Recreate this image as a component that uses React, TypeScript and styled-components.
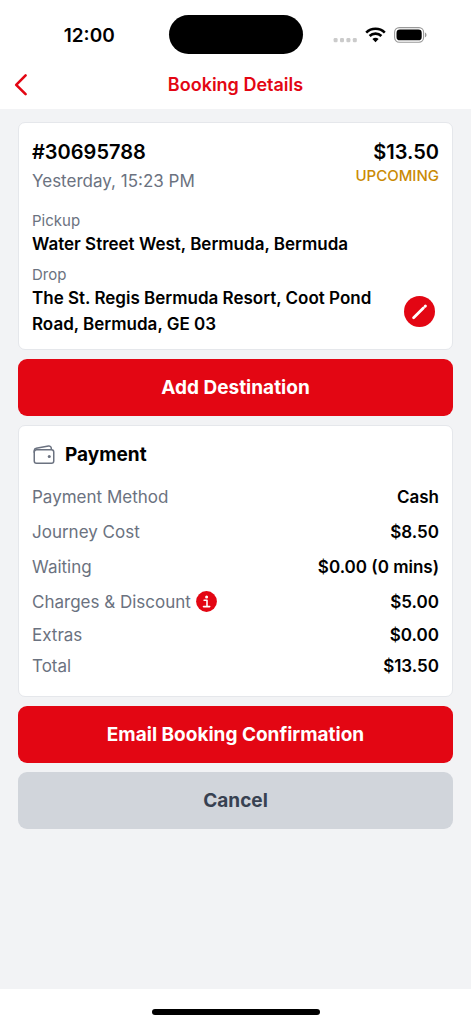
import React from "react";
import styled, { createGlobalStyle } from "styled-components";
import { IoWalletOutline } from "react-icons/io5";

const GlobalStyle = createGlobalStyle`
  *, *::before, *::after { box-sizing: border-box; }
  body { margin: 0; background: #fff; color: #000; font-family: Inter, "Liberation Sans", sans-serif; }
  h1, h2, p, dl, dt, dd { margin: 0; font-weight: 400; }
  button { border: 0; padding: 0; font-family: inherit; cursor: pointer; }
`;

const red = "#e30613";
const grey = "#6b7280";

const Screen = styled.div`
  display: flex;
  flex-direction: column;
  min-height: 100vh;
`;

const StatusBar = styled.div`
  display: grid;
  grid-template-columns: 1fr auto 1fr;
  align-items: center;
  padding: 15px 0 6px;
`;

const Clock = styled.time`
  justify-self: center;
  padding: 2px 0 0 10px;
  font-size: 19px;
  line-height: 24px;
  font-weight: 600;
`;

const Island = styled.div`
  width: 134px;
  height: 39px;
  border-radius: 20px;
  background: #000;
`;

const Indicators = styled.div`
  display: flex;
  align-items: center;
  justify-self: center;
  gap: 8px;
  padding-right: 14px;
`;

const NavBar = styled.header`
  display: grid;
  grid-template-columns: 1fr auto 1fr;
  align-items: center;
  height: 49px;
  color: ${red};
`;

const BackButton = styled.button`
  display: flex;
  align-items: center;
  justify-self: start;
  height: 40px;
  padding: 0 12px;
  background: none;
  color: inherit;
`;

const NavTitle = styled.h1`
  font-size: 18px;
  line-height: 24px;
  font-weight: 600;
`;

const Content = styled.main`
  flex: 1;
  display: flex;
  flex-direction: column;
  gap: 9px;
  padding: 13px 18px;
  background: #f2f3f5;
`;

const Card = styled.section`
  padding: 15px 13px 12px;
  border: 1px solid #e5e7eb;
  border-radius: 7px;
  background: #fff;
`;

const Summary = styled.div`
  display: flex;
  justify-content: space-between;
  margin-bottom: 15px;
`;

const SummaryColumn = styled.div<{ $end?: boolean }>`
  text-align: ${(p) => (p.$end ? "right" : "left")};
`;

const Headline = styled.p`
  font-size: 20px;
  line-height: 28px;
  font-weight: 600;
`;

const DateText = styled.p`
  font-size: 17px;
  line-height: 30px;
  color: ${grey};
`;

const Status = styled.p`
  font-size: 15px;
  line-height: 20px;
  font-weight: 500;
  color: #ca8a04;
`;

const Stop = styled.div`
  & + & { margin-top: 8px; }
`;

const StopLabel = styled.p`
  font-size: 15px;
  line-height: 20px;
  color: ${grey};
`;

const StopRow = styled.div`
  display: flex;
  align-items: center;
  justify-content: space-between;
  gap: 20px;
  padding-right: 4px;
`;

const Address = styled.p`
  font-size: 17px;
  line-height: 26px;
  font-weight: 600;
`;

const EditButton = styled.button`
  display: grid;
  place-items: center;
  flex: none;
  width: 31px;
  height: 31px;
  border-radius: 50%;
  background: ${red};
  color: #fff;
`;

const ActionButton = styled.button<{ $muted?: boolean }>`
  height: 57px;
  border-radius: 9px;
  background: ${(p) => (p.$muted ? "#d1d5db" : red)};
  color: ${(p) => (p.$muted ? "#374151" : "#fff")};
  font-size: 19px;
  line-height: 28px;
  font-weight: 700;
`;

const PaymentHeader = styled.div`
  display: flex;
  align-items: center;
  gap: 9px;
  margin-bottom: 10px;
  svg { color: ${grey}; }
`;

const PaymentTitle = styled.h2`
  font-size: 19px;
  line-height: 28px;
  font-weight: 700;
`;

const CostList = styled.dl`
  padding-bottom: 3px;
`;

const CostRow = styled.div<{ $compact?: boolean }>`
  display: flex;
  align-items: center;
  justify-content: space-between;
  height: ${(p) => (p.$compact ? 31 : 35)}px;
  font-size: 17px;
  line-height: 24px;
`;

const CostLabel = styled.dt`
  display: flex;
  align-items: center;
  gap: 5px;
  color: ${grey};
`;

const CostValue = styled.dd`
  font-weight: 600;
`;

const InfoButton = styled.button`
  display: flex;
  background: none;
  color: ${red};
`;

const Footer = styled.footer`
  display: flex;
  justify-content: center;
  padding: 20px 0 9px;
`;

const HomeIndicator = styled.div`
  width: 168px;
  height: 6px;
  border-radius: 3px;
  background: #000;
`;

const costs = [
  { label: "Payment Method", value: "Cash" },
  { label: "Journey Cost", value: "$8.50" },
  { label: "Waiting", value: "$0.00 (0 mins)" },
  { label: "Charges & Discount", value: "$5.00", info: true },
  { label: "Extras", value: "$0.00", compact: true },
  { label: "Total", value: "$13.50", compact: true },
];

const SignalIcon = () => (
  <svg width="24" height="16" viewBox="0 0 24 16" fill="#cbcbcb" aria-hidden="true">
    {[0.6, 7, 13.4, 19.8].map((x) => (
      <rect key={x} x={x} y="11" width="4" height="4.2" rx="1.3" />
    ))}
  </svg>
);

const WifiIcon = () => (
  <svg width="21" height="16" viewBox="0 0 21 16" aria-hidden="true">
    <g fill="none" stroke="#000" strokeWidth="2.6">
      <path d="M1.2 5.6a13.2 13.2 0 0 1 18.6 0" />
      <path d="M4.6 9a8.4 8.4 0 0 1 11.8 0" />
    </g>
    <path d="M10.5 15.2 7.4 12.1a4.5 4.5 0 0 1 6.2 0Z" />
  </svg>
);

const BatteryIcon = () => (
  <svg width="33" height="16" viewBox="0 0 33 16" aria-hidden="true">
    <rect x="0.6" y="0.6" width="29" height="14.6" rx="4.6" fill="none" stroke="#999" strokeWidth="1.1" />
    <rect x="2.5" y="2.5" width="25.2" height="10.8" rx="3.4" />
    <path d="M31 5.5c2 .8 2 4 0 4.8Z" fill="#999" />
  </svg>
);

const PencilIcon = () => (
  <svg width="17" height="17" viewBox="0 0 17 17" fill="none" stroke="currentColor" strokeLinecap="round" aria-hidden="true">
    <path d="M2.6 14.8 12.4 5" strokeWidth="2.8" />
    <path d="m14.2 3.2.2-.2" strokeWidth="3" />
  </svg>
);

const InfoIcon = () => (
  <svg width="21" height="21" viewBox="0 0 21 21" aria-hidden="true">
    <circle cx="10.5" cy="10.5" r="10.4" fill="currentColor" />
    <circle cx="10.6" cy="5.9" r="1.5" fill="#fff" />
    <path d="M8.1 9.3h2.9v6.2M7.5 15.6h6.2" fill="none" stroke="#fff" strokeWidth="1.6" strokeLinecap="round" strokeLinejoin="round" />
  </svg>
);

export default function App() {
  return (
    <Screen>
      <GlobalStyle />
      <StatusBar>
        <Clock>12:00</Clock>
        <Island />
        <Indicators>
          <SignalIcon />
          <WifiIcon />
          <BatteryIcon />
        </Indicators>
      </StatusBar>
      <NavBar>
        <BackButton aria-label="Back">
          <svg width="18" height="24" viewBox="0 0 18 24" fill="none" stroke="currentColor" strokeWidth="2.6" strokeLinecap="round" strokeLinejoin="round">
            <path d="M13.6 2.4 4.2 11.8l9.4 9.4" />
          </svg>
        </BackButton>
        <NavTitle>Booking Details</NavTitle>
      </NavBar>
      <Content>
        <Card>
          <Summary>
            <SummaryColumn>
              <Headline as="h2">#30695788</Headline>
              <DateText>Yesterday, 15:23 PM</DateText>
            </SummaryColumn>
            <SummaryColumn $end>
              <Headline>$13.50</Headline>
              <Status>UPCOMING</Status>
            </SummaryColumn>
          </Summary>
          <Stop>
            <StopLabel>Pickup</StopLabel>
            <Address>Water Street West, Bermuda, Bermuda</Address>
          </Stop>
          <Stop>
            <StopLabel>Drop</StopLabel>
            <StopRow>
              <Address>The St. Regis Bermuda Resort, Coot Pond Road, Bermuda, GE 03</Address>
              <EditButton aria-label="Edit drop">
                <PencilIcon />
              </EditButton>
            </StopRow>
          </Stop>
        </Card>
        <ActionButton>Add Destination</ActionButton>
        <Card>
          <PaymentHeader>
            <IoWalletOutline size={24} />
            <PaymentTitle>Payment</PaymentTitle>
          </PaymentHeader>
          <CostList>
            {costs.map((c) => (
              <CostRow key={c.label} $compact={c.compact}>
                <CostLabel>
                  {c.label}
                  {c.info && (
                    <InfoButton aria-label="About charges and discount">
                      <InfoIcon />
                    </InfoButton>
                  )}
                </CostLabel>
                <CostValue>{c.value}</CostValue>
              </CostRow>
            ))}
          </CostList>
        </Card>
        <ActionButton>Email Booking Confirmation</ActionButton>
        <ActionButton $muted>Cancel</ActionButton>
      </Content>
      <Footer>
        <HomeIndicator />
      </Footer>
    </Screen>
  );
}
